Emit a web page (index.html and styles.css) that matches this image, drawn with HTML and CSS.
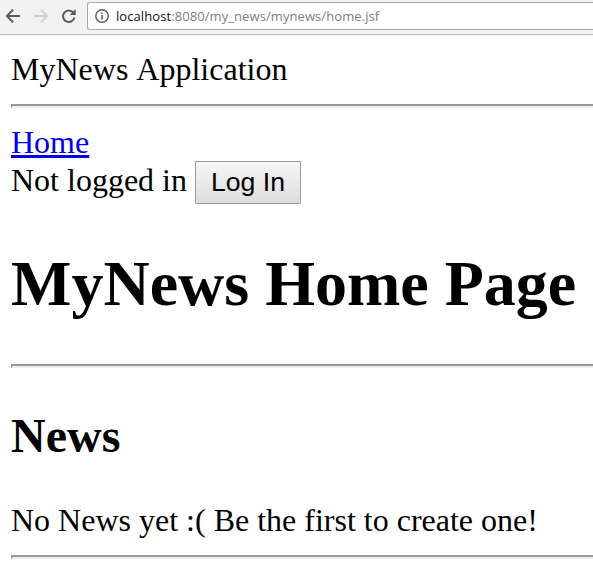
FILE: index.html
```html
<!DOCTYPE html>
<html lang="en">
<head>
<meta charset="utf-8">
<title>MyNews</title>
<link rel="stylesheet" href="styles.css">
</head>
<body>
<div class="toolbar">
  <svg class="nav" width="86" height="34" viewBox="0 0 86 34" fill="none" stroke-width="2">
    <path d="M20 16H7.5M13 9.7L6.9 16L13 22.3" stroke="#5a5a5a"/>
    <path d="M34 16H46.5M41 9.7L47.1 16L41 22.3" stroke="#d0d0d0"/>
    <path d="M73.4 12.6A5.8 5.8 0 1 0 74.5 17.5" stroke="#5a5a5a"/>
    <path d="M75.7 9V15H69.7Z" fill="#5a5a5a"/>
  </svg>
  <div class="address">
    <svg class="info" width="14" height="14" viewBox="0 0 14 14">
      <circle cx="7" cy="7" r="6.2" fill="none" stroke="#5a5a5a" stroke-width="1.4"/>
      <path d="M6.2 3.4H7.8V5H6.2ZM6.2 6H7.8V10.6H6.2Z" fill="#5a5a5a"/>
    </svg>
    <span class="url"><span class="host">localhost</span>:8080/my_news/mynews/home.jsf</span>
  </div>
</div>
<main class="page">
  <div class="line">MyNews Application</div>
  <hr>
  <div class="line"><a href="#">Home</a></div>
  <div class="login"><span>Not logged in</span><button type="button">Log In</button></div>
  <h1>MyNews Home Page</h1>
  <hr>
  <h2>News</h2>
  <p>No News yet :( Be the first to create one!</p>
  <hr>
</main>
</body>
</html>
```
FILE: styles.css
```css
body {
  margin: 0;
  background: #fff;
  color: #000;
  font: 32px/36px "Liberation Serif", serif;
  font-kerning: none;
  overflow: hidden;
}

.toolbar {
  display: flex;
  box-sizing: border-box;
  height: 35px;
  padding-top: 2px;
  background: #f2f2f2;
  border-bottom: 1px solid #b3b5b3;
}

.nav {
  flex: none;
  margin-top: -2px;
}

.address {
  display: flex;
  align-items: center;
  flex: 1;
  box-sizing: border-box;
  height: 28px;
  margin-left: 1px;
  padding-left: 7px;
  background: #fff;
  border: 1px solid #a6a8a6;
  border-right: 0;
  border-radius: 3px 0 0 3px;
}

.info {
  flex: none;
}

.url {
  margin-left: 7px;
  color: #808080;
  font: 13px/18px "Open Sans", sans-serif;
  letter-spacing: 0.08px;
  white-space: nowrap;
}

.host {
  color: #111;
}

.page {
  padding: 16px 0 0 11px;
}

.line {
  height: 36px;
}

hr {
  height: 0;
  margin: 17px -4px 16px 0;
  border: 2px solid;
  border-color: #9a9a9a #eee #eee #9a9a9a;
}

a {
  color: #00e;
  text-decoration-thickness: 3px;
}

.login {
  display: flex;
  height: 43px;
  margin-top: 1px;
  line-height: 38px;
}

button {
  box-sizing: border-box;
  width: 106px;
  height: 43px;
  margin-left: 8px;
  padding: 0 0 1px;
  border: 1px solid #999;
  border-radius: 1px;
  background: linear-gradient(#f6f6f6, #ddd);
  color: #000;
  font: 26.67px/40px "Liberation Sans", sans-serif;
}

h1 {
  margin: 44px 0;
  font-size: 64px;
  line-height: 72px;
  white-space: nowrap;
}

h2 {
  margin: 41px 0 39px;
  font-size: 48px;
  line-height: 54px;
}

p {
  margin: 0;
  white-space: nowrap;
}
```
